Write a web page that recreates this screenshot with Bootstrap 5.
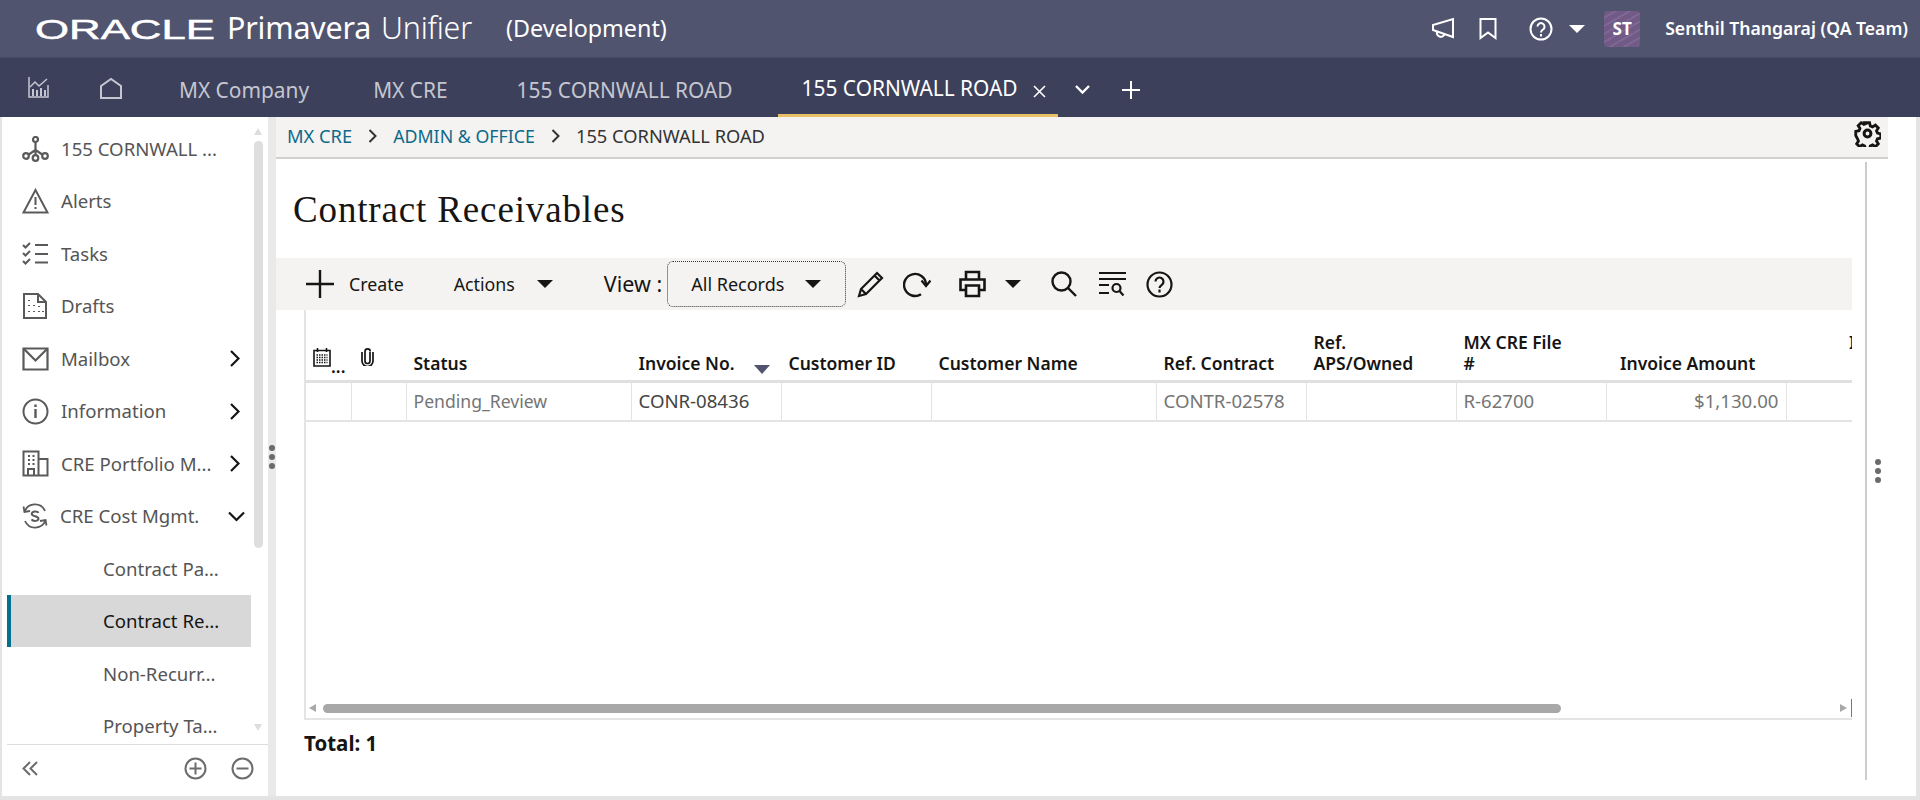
<!DOCTYPE html>
<html lang="en">
<head>
<meta charset="UTF-8">
<title>Contract Receivables</title>
<link href="https://cdn.jsdelivr.net/npm/bootstrap@5.3.3/dist/css/bootstrap.min.css" rel="stylesheet">
<style>
body { height: 800px; width: 1920px; overflow: hidden; background: #e4e4e4; font-family: "Noto Sans", "Liberation Sans", sans-serif; color: #161513; }
svg { display: block; flex: none; }

/* spacing helpers for the picture's own gaps */
.sl-5 { margin-left: 5px; } .sl-11 { margin-left: 11px; } .sl-15 { margin-left: 15px; } .sl-18 { margin-left: 18px; } .sl-19 { margin-left: 19px; }
.sl-20 { margin-left: 20px; } .sl-22 { margin-left: 22px; } .sl-24 { margin-left: 24px; }
.sl-28 { margin-left: 28px; } .sl-30 { margin-left: 30px; } .sl-32 { margin-left: 32px; } .sl-50 { margin-left: 50px; } .sl-51 { margin-left: 51px; }

.top-bar { height: 57px; background: #51546f; color: #fff; padding: 0 12px 0 35px; flex-wrap: nowrap; }
.logo-word { width: 182px; height: 32px; margin-right: 10px; }
.logo-prod { font-size: 30.4px; line-height: 1; letter-spacing: -.2px; }
.logo-light { font-weight: 300; margin-left: 10px; }
.env-name { font-size: 23.3px; margin-left: 34px; }
.avatar-box { width: 36px; height: 36px; border-radius: 4px; font-size: 17px; font-weight: 700; background: repeating-linear-gradient(150deg, #715a86 0 5px, #7f6795 5px 7px); }
.user-name { font-size: 17.6px; font-weight: 600; margin-left: 25px; }
.caret-down { width: 0; height: 0; border-left: 8px solid transparent; border-right: 8px solid transparent; border-top: 8px solid currentColor; flex: none; }

.tab-bar { height: 60px; background: #3c405b; border-top: 1px solid #474a66; flex-wrap: nowrap; padding-left: 28px; }
.tab-link { color: #c5c6cf; font-size: 20.9px; height: 100%; display: flex; align-items: center; white-space: nowrap; text-decoration: none; padding-top: 7px; }
.tab-link:hover { color: #fff; }
.tab-first { margin-left: 56px; }
.tab-second { margin-left: 64px; }
.tab-third { margin-left: 69px; }
.tab-on { color: #fff; height: 59px; border-bottom: 3px solid #e9bf67; padding: 5px 0 0 24px; width: 280px; margin-left: 45px; }
.tab-x { margin-left: 15px; margin-top: 6px; }
.tab-more { margin-left: 16px; margin-top: 3px; }
.tab-add { margin-left: 31px; margin-top: 5px; }

.page-row { height: 681px; padding: 0 2px 2px; }
.side-panel { width: 266px; background: #fff; }
.side-scroll { height: 627px; overflow: hidden; padding: 5.4px 0 0 5px; position: relative; }
.list-group-flush > .list-group-item.side-item { height: 52.5px; width: 244px; padding: 0 0 0 11px; border-width: 0 0 0 4px; border-style: solid; border-color: transparent; background: none; color: #555; font-size: 18.6px; display: flex; align-items: center; gap: 12px; white-space: nowrap; }
.side-item svg.chev { margin-left: auto; margin-right: 11px; }
.side-item svg.chev-open { margin-right: 6px; }
.list-group-flush > .list-group-item.side-sub { padding-left: 92px; }
.list-group-flush > .list-group-item.side-sel { background: #d8d8d8; border-left-color: #04708f; color: #161513; }
.side-track { position: absolute; left: 252px; top: 11px; width: 9px; height: 603px; }
.side-thumb { height: 407px; width: 9px; margin-top: 6px; border-radius: 5px; background: #dedede; }
.tri-up, .tri-down { width: 0; height: 0; border-left: 4.5px solid transparent; border-right: 4.5px solid transparent; }
.tri-up { border-bottom: 7px solid #ddd; }
.tri-down { border-top: 7px solid #ddd; position: absolute; bottom: 0; }
.side-foot { height: 52px; margin-left: 5px; border-top: 1px solid #ddd; padding: 0 14px 5px 15px; color: #6c6c6c; }

.split-bar { width: 8px; background: #e9e9e9; }
.dot-col { gap: 3px; }
.dot-col span { width: 6px; height: 6px; border-radius: 50%; background: #6b6b6b; display: block; }

.main-area { width: 1640px; background: #fff; }
.crumb-bar { height: 42px; width: 1612px; background: #f4f3f1; border-bottom: 2px solid #d0d0cd; padding: 0 7px 2px 11px; font-size: 18.3px; }
.crumb-bar a { color: #0e6a8a; text-decoration: none; }
.crumb-bar a.crumb-mid { font-size: 17.8px; }
.crumb-end { color: #333; }
.crumb-sep { margin: 0 16px; }
.crumb-gear { margin-top: -6px; }
.page-title { font-family: "Liberation Serif", serif; font-size: 37px; font-weight: 400; letter-spacing: .85px; margin: 0; padding: 31px 0 0 17px; height: 99px; line-height: 40px; color: #161513; }
.tool-bar { height: 52px; background: #f4f3f1; padding-left: 30px; font-size: 17.8px; }
.tool-lbl { font-size: 21.5px; }
.btn.view-box { width: 179px; height: 46px; border: 1px dotted #333; border-radius: 6px; margin-left: 5px; font-size: 18px; background: #f4f3f1; color: #161513; }
.view-txt { margin-left: 23px; }
.view-caret { margin-right: 24px; }
.grid-wrap { margin-left: 28px; height: 410px; border-left: 2px solid #e4e4e4; border-bottom: 2px solid #e4e4e4; position: relative; overflow: hidden; }
.rec-table { table-layout: fixed; width: 1620px; margin: 0; font-size: 17.5px; }
.rec-table th { height: 71.5px; padding: 0 4px 6.5px 7.5px; font-weight: 600; vertical-align: bottom; line-height: 21px; color: #161513; border-bottom: 3px solid #e0e0e0; box-shadow: none; white-space: nowrap; }
.rec-table td { height: 39px; padding: 0 7px; vertical-align: middle; font-size: 17.6px; color: #757575; border-bottom: 2px solid #e4e4e4; border-right: 1px solid #e4e4e4; white-space: nowrap; }
.rec-table td.cell-code { font-size: 18.6px; }
.rec-table td.cell-dark { color: #444; }
.rec-table th.th-icon { padding-left: 7px; }
.rec-table th.th-clip { padding-left: 10px; }
.rec-table th.th-amount { padding-left: 14px; }
.rec-table th.th-next { padding-left: 63px; }
.col-45 { width: 45px; } .col-55 { width: 55px; } .col-225 { width: 225px; } .col-150 { width: 150px; } .col-180 { width: 180px; } .col-140 { width: 140px; }
.th-flex { display: flex; align-items: flex-end; }
.cal-ico { margin-bottom: 7px; }
.clip-ico { margin-bottom: 8px; }
.th-dots { line-height: 16px; }
.sort-tri { width: 0; height: 0; border-left: 8px solid transparent; border-right: 8px solid transparent; border-top: 9px solid #51546f; margin-left: 19px; flex: none; }
.hscroll { position: absolute; left: 0; right: 0; bottom: 0; height: 20px; padding-left: 3px; }
.hscroll-thumb { width: 1238px; height: 9px; border-radius: 5px; background: #a8a8a8; margin-left: 7px; }
.tri-l, .tri-r { width: 0; height: 0; border-top: 4.5px solid transparent; border-bottom: 4.5px solid transparent; }
.tri-l { border-right: 7px solid #a8a8a8; }
.tri-r { border-left: 7px solid #a8a8a8; margin-left: auto; margin-right: 4px; }
.hscroll-end { width: 1px; height: 18px; background: #777; }
.total-line { font-size: 20.5px; font-weight: 700; margin: 10px 0 0 28px; line-height: 26px; }
.body-col { width: 1576px; }
.right-rail { width: 51px; height: 618px; margin: 3px 0 0 13px; border-left: 2px solid #ccc; padding-left: 8px; }
</style>
</head>
<body class="d-flex flex-column">

<nav class="navbar top-bar">
  <div class="d-flex align-items-center">
    <svg class="logo-word" viewBox="0 0 182 32"><text x="0" y="26" textLength="180" lengthAdjust="spacingAndGlyphs" font-family="Liberation Sans" font-size="28" fill="#fff" stroke="#fff" stroke-width=".5">ORACLE</text></svg>
    <span class="logo-prod">Primavera<span class="logo-light">Unifier</span></span>
    <span class="env-name">(Development)</span>
  </div>
  <div class="d-flex align-items-center">
    <svg width="24" height="24" viewBox="0 0 24 24" fill="none" stroke="#fff" stroke-width="2"><path d="M22 2v18L2 13V8zM6 14.500a4 4 0 1 0 7.600 2.500"/></svg>
    <svg class="sl-24" width="18" height="22" viewBox="0 0 18 22" fill="none" stroke="#fff" stroke-width="2"><path d="M1.500 1h15v19L9 14.500 1.500 20z"/></svg>
    <svg class="sl-32" width="24" height="24" viewBox="0 0 24 24" fill="none" stroke="#fff" stroke-width="2"><circle cx="12" cy="12" r="10.500"/><path d="M8.500 9.500a3.500 3.500 0 1 1 5.500 3c-1.300.9-2 1.500-2 3"/><path d="M12 17v2.500"/></svg>
    <span class="caret-down ms-3"></span>
    <div class="avatar-box sl-19 d-flex align-items-center justify-content-center">ST</div>
    <span class="user-name">Senthil Thangaraj (QA Team)</span>
  </div>
</nav>

<div class="nav tab-bar align-items-center">
  <svg width="21" height="21" viewBox="0 0 21 21" fill="none" stroke="#c5c6cf" stroke-width="1.500"><path d="M1 0v20h19V8"/><path d="M2 10l5-5 4 4 8-7"/><path d="M5 19v-7M9 19v-6M13 19v-8M17 19v-6" stroke-width="2"/></svg>
  <svg class="sl-50" width="24" height="22" viewBox="0 0 24 22" fill="none" stroke="#c5c6cf" stroke-width="2"><path d="M2 21V9l10-7 10 7v12z"/></svg>
  <a class="tab-link tab-first" href="#">MX Company</a>
  <a class="tab-link tab-second" href="#">MX CRE</a>
  <a class="tab-link tab-third" href="#">155 CORNWALL ROAD</a>
  <a class="tab-link tab-on" href="#">155 CORNWALL ROAD
    <svg class="tab-x" width="13" height="13" viewBox="0 0 13 13" stroke="#fff" stroke-width="1.600"><path d="M1 1l11 11M12 1L1 12"/></svg>
  </a>
  <svg class="tab-more" width="17" height="11" viewBox="0 0 17 11" fill="none" stroke="#fff" stroke-width="2.400"><path d="M2 2l6.500 6.500L15 2"/></svg>
  <svg class="tab-add" width="18" height="18" viewBox="0 0 18 18" stroke="#fff" stroke-width="2"><path d="M9 0v18M0 9h18"/></svg>
</div>

<div class="page-row d-flex">
  <div class="side-panel d-flex flex-column">
    <div class="side-scroll">
      <div class="list-group list-group-flush">
        <div class="list-group-item side-item">
          <svg width="27" height="26" viewBox="0 0 27 26" fill="none" stroke="#5a5a5a" stroke-width="2.200"><circle cx="13.500" cy="3.500" r="2.500"/><circle cx="4" cy="20" r="2.800"/><circle cx="13.500" cy="22" r="2.800"/><circle cx="23" cy="20" r="2.800"/><path d="M13.500 6v13M13.500 14l-7.500 5M13.500 14l7.500 5"/></svg>155 CORNWALL ...</div>
        <div class="list-group-item side-item">
          <svg width="27" height="26" viewBox="0 0 27 26" fill="none" stroke="#5a5a5a" stroke-width="2"><path d="M13.500 2L1.500 24.500h24z"/><path d="M13.500 9v8M13.500 19v2"/></svg>Alerts</div>
        <div class="list-group-item side-item">
          <svg width="27" height="24" viewBox="0 0 27 24" fill="none" stroke="#5a5a5a" stroke-width="2"><path d="M1 3l2.500 2.500L8 1M1 11l2.500 2.500L8 9M1 19l2.500 2.500L8 17"/><path d="M13 3h13M13 12h13M13 20.500h13" stroke-width="2.200"/></svg>Tasks</div>
        <div class="list-group-item side-item">
          <svg width="27" height="26" viewBox="0 0 27 26" fill="none" stroke="#5a5a5a" stroke-width="2"><path d="M2 1h14l8 8v16H2z"/><path d="M16 1v8h8"/><path d="M7 7v1M7 12v1M7 18v1M12 18v1M17 18v1M12 12v1M17 13v1M21 18v1" stroke-width="2"/></svg>Drafts</div>
        <div class="list-group-item side-item">
          <svg width="27" height="24" viewBox="0 0 27 24" fill="none" stroke="#5a5a5a" stroke-width="2.200"><path d="M1.500 1.500h24v21h-24z"/><path d="M1.500 1.500l12 12 12-12"/></svg>Mailbox<svg class="chev" width="11" height="17" viewBox="0 0 11 17" fill="none" stroke="#161513" stroke-width="2.200"><path d="M2 1l7.500 7.500L2 16"/></svg></div>
        <div class="list-group-item side-item">
          <svg width="27" height="27" viewBox="0 0 27 27" fill="none" stroke="#5a5a5a" stroke-width="2"><circle cx="13.500" cy="13.500" r="12"/><path d="M13.500 11v9M13.500 6.500v2.500" stroke-width="2.400"/></svg>Information<svg class="chev" width="11" height="17" viewBox="0 0 11 17" fill="none" stroke="#161513" stroke-width="2.200"><path d="M2 1l7.500 7.500L2 16"/></svg></div>
        <div class="list-group-item side-item">
          <svg width="27" height="27" viewBox="0 0 27 27" fill="none" stroke="#5a5a5a" stroke-width="2"><path d="M1.500 1.500h15v24h-15zM16.500 9h9v16.500h-9M6 25v-6h6v6"/><path d="M6 6h2M10.500 6h2M6 10h2M10.500 10h2M6 14h2M10.500 14h2" stroke-width="2"/></svg>CRE Portfolio M...<svg class="chev" width="11" height="17" viewBox="0 0 11 17" fill="none" stroke="#161513" stroke-width="2.200"><path d="M2 1l7.500 7.500L2 16"/></svg></div>
        <div class="list-group-item side-item">
          <svg width="26" height="26" viewBox="0 0 26 26" fill="none" stroke="#5a5a5a" stroke-width="1.800"><path d="M2.500 9A11 11 0 0 1 23 8M23.500 17A11 11 0 0 1 3 18"/><path d="M1.500 3.500l1 5.500 5.500-1M24.500 22.500l-1-5.500-5.500 1"/><path d="M16.500 9.800c-.8-1.800-6.500-2-6.800 1-.2 3 6.800 1.800 6.800 4.800 0 2.800-5.500 3-7 .8" stroke-width="2"/></svg>CRE Cost Mgmt.<svg class="chev chev-open" width="17" height="11" viewBox="0 0 17 11" fill="none" stroke="#161513" stroke-width="2.200"><path d="M1 1.500l7.500 7.500L16 1.500"/></svg></div>
        <div class="list-group-item side-item side-sub">Contract Pa…</div>
        <div class="list-group-item side-item side-sub side-sel">Contract Re…</div>
        <div class="list-group-item side-item side-sub">Non-Recurr…</div>
        <div class="list-group-item side-item side-sub">Property Ta…</div>
      </div>
      <div class="side-track">
        <div class="tri-up"></div>
        <div class="side-thumb"></div>
        <div class="tri-down"></div>
      </div>
    </div>
    <div class="side-foot d-flex align-items-center">
      <svg width="16" height="15" viewBox="0 0 16 15" fill="none" stroke="#6c6c6c" stroke-width="2"><path d="M8 1L1.500 7.500 8 14M15 1L8.500 7.500 15 14"/></svg>
      <svg class="ms-auto" width="23" height="23" viewBox="0 0 23 23" fill="none" stroke="#6c6c6c" stroke-width="2"><circle cx="11.500" cy="11.500" r="10"/><path d="M5.500 11.500h12M11.500 5.500v12"/></svg>
      <svg class="sl-24" width="23" height="23" viewBox="0 0 23 23" fill="none" stroke="#6c6c6c" stroke-width="2"><circle cx="11.500" cy="11.500" r="10"/><path d="M5.500 11.500h12"/></svg>
    </div>
  </div>

  <div class="split-bar d-flex flex-column align-items-center justify-content-center">
    <div class="dot-col d-flex flex-column"><span></span><span></span><span></span></div>
  </div>

  <div class="main-area">
    <div class="crumb-bar d-flex align-items-center">
      <a href="#">MX CRE</a>
      <svg class="crumb-sep" width="9" height="14" viewBox="0 0 9 14" fill="none" stroke="#333" stroke-width="2"><path d="M1.500 1l6 6-6 6"/></svg>
      <a class="crumb-mid" href="#">ADMIN &amp; OFFICE</a>
      <svg class="crumb-sep" width="9" height="14" viewBox="0 0 9 14" fill="none" stroke="#333" stroke-width="2"><path d="M1.500 1l6 6-6 6"/></svg>
      <span class="crumb-end">155 CORNWALL ROAD</span>
      <svg class="ms-auto crumb-gear" width="27" height="27" viewBox="0 0 27 27" fill="none" stroke="#161513" stroke-width="3"><path d="M11.300 2h4.400l.8 3.500 2.400 1 3-1.900 3.100 3.100-1.900 3 1 2.400 3.500.8v4.400l-3.500.8-1 2.400 1.900 3-3.100 3.100-3-1.900-2.400 1-.8 3.500h-4.400l-.8-3.500-2.400-1-3 1.900-3.100-3.100 1.900-3-1-2.400L1 15.700v-4.400l3.500-.8 1-2.400-1.900-3 3.100-3.100 3 1.900 2.400-1z" transform="translate(.8 .8) scale(.94)"/><circle cx="13.500" cy="13.500" r="3.400"/></svg>
    </div>
    <div class="d-flex">
      <div class="body-col">
        <h1 class="page-title">Contract Receivables</h1>
        <div class="tool-bar d-flex align-items-center">
          <svg width="28" height="28" viewBox="0 0 28 28" stroke="#161513" stroke-width="2.400"><path d="M14 0v28M0 14h28"/></svg>
          <span class="sl-15">Create</span>
          <span class="sl-50">Actions</span>
          <span class="caret-down sl-22"></span>
          <span class="tool-lbl sl-51">View :</span>
          <button class="btn view-box d-flex align-items-center justify-content-between p-0">
            <span class="view-txt">All Records</span><span class="caret-down view-caret"></span>
          </button>
          <svg class="sl-11" width="28" height="28" viewBox="0 0 28 28" fill="none" stroke="#161513" stroke-width="2.200"><path d="M2 26l2-7L20 3l5 5L9 24zM17.500 5.500l5 5M4 19l5 5"/></svg>
          <svg class="sl-18" width="28" height="28" viewBox="0 0 28 28" fill="none" stroke="#161513" stroke-width="2.400"><path d="M18 24.200A11 11 0 1 1 23 14"/><path d="M18.500 10.500l4.500 5.500 4.500-5.500" stroke-width="2.200"/></svg>
          <svg class="sl-28" width="27" height="28" viewBox="0 0 27 28" fill="none" stroke="#161513" stroke-width="2.600"><path d="M7 9V2h13v7M6 20H1.500V9.500h24V20H21"/><path d="M7 15.500h13V26H7z"/></svg>
          <span class="caret-down sl-19"></span>
          <svg class="sl-30" width="26" height="26" viewBox="0 0 26 26" fill="none" stroke="#161513" stroke-width="2.400"><circle cx="10.500" cy="10.500" r="9"/><path d="M17 17l8 8"/></svg>
          <svg class="sl-22" width="27" height="26" viewBox="0 0 27 26" fill="none" stroke="#161513" stroke-width="2.200"><path d="M0 2h27M0 8h27M0 14h10M0 22h10"/><circle cx="17.500" cy="17" r="4"/><path d="M20.500 20l4 4.500"/></svg>
          <svg class="sl-20" width="27" height="27" viewBox="0 0 27 27" fill="none" stroke="#161513" stroke-width="2.200"><circle cx="13.500" cy="13.500" r="12"/><path d="M9.500 10.500a4 4 0 1 1 6.300 3.300c-1.500 1-2.300 1.700-2.300 3.200"/><path d="M13.500 18.500v3"/></svg>
        </div>
        <div class="grid-wrap">
          <table class="table rec-table">
            <colgroup><col class="col-45"><col class="col-55"><col class="col-225"><col class="col-150"><col class="col-150"><col class="col-225"><col class="col-150"><col class="col-150"><col class="col-150"><col class="col-180"><col class="col-140"></colgroup>
            <thead>
              <tr>
                <th class="th-icon"><div class="th-flex"><svg class="cal-ico" width="18" height="20" viewBox="0 0 18 20" fill="none" stroke="#161513" stroke-width="1.600"><path d="M1 3.500h16v15.500H1z"/><path d="M4.500 1v4M13.500 1v4"/><path d="M3.500 8h11M3.500 10.500h11M3.500 13h11M3.500 15.500h11" stroke-dasharray="1.500 1" stroke-width="1.400"/></svg><span class="th-dots">...</span></div></th>
                <th class="th-clip"><svg class="clip-ico" width="13" height="18" viewBox="0 0 13 18" fill="none" stroke="#161513" stroke-width="1.700"><path d="M9 4v9a2.500 2.500 0 0 1-5 0V3.500a2.600 2.600 0 0 1 5.200 0M12 4v9a5.500 5.500 0 0 1-11 0V4"/></svg></th>
                <th>Status</th>
                <th><div class="th-flex">Invoice No.<span class="sort-tri"></span></div></th>
                <th>Customer ID</th>
                <th>Customer Name</th>
                <th>Ref. Contract</th>
                <th>Ref.<br>APS/Owned</th>
                <th>MX CRE File<br>#</th>
                <th class="th-amount">Invoice Amount</th>
                <th class="th-next">I<br>&nbsp;</th>
              </tr>
            </thead>
            <tbody>
              <tr>
                <td></td><td></td>
                <td>Pending_Review</td>
                <td class="cell-dark cell-code">CONR-08436</td>
                <td></td><td></td>
                <td class="cell-code">CONTR-02578</td>
                <td></td>
                <td class="cell-code">R-62700</td>
                <td class="text-end cell-code">$1,130.00</td>
                <td></td>
              </tr>
            </tbody>
          </table>
          <div class="hscroll d-flex align-items-center">
            <span class="tri-l"></span>
            <div class="hscroll-thumb"></div>
            <span class="tri-r"></span>
            <span class="hscroll-end"></span>
          </div>
        </div>
        <div class="total-line">Total: 1</div>
      </div>
      <div class="right-rail d-flex align-items-center">
        <div class="dot-col d-flex flex-column"><span></span><span></span><span></span></div>
      </div>
    </div>
  </div>
</div>

<script src="https://cdn.jsdelivr.net/npm/bootstrap@5.3.3/dist/js/bootstrap.bundle.min.js"></script>
</body>
</html>
